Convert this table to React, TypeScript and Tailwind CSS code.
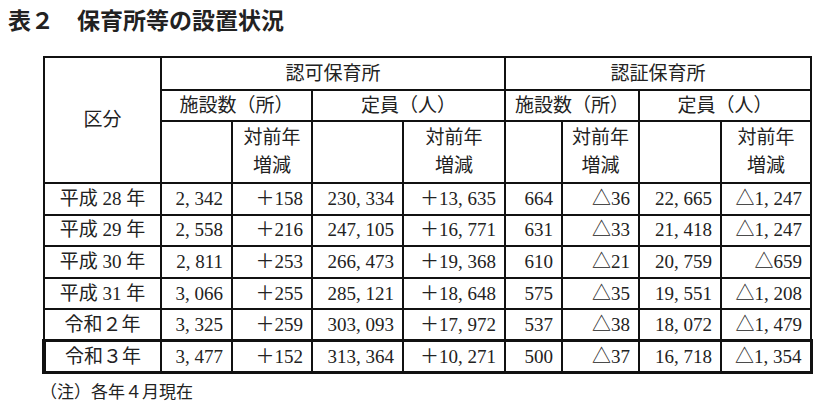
import { Fragment } from 'react';

const serif = { fontFamily: '"Liberation Serif", "Noto Sans CJK JP", serif' };

const rows = [
  ['平成 28 年', '2, 342', '＋158', '230, 334', '＋13, 635', '664', '△36', '22, 665', '△1, 247'],
  ['平成 29 年', '2, 558', '＋216', '247, 105', '＋16, 771', '631', '△33', '21, 418', '△1, 247'],
  ['平成 30 年', '2, 811', '＋253', '266, 473', '＋19, 368', '610', '△21', '20, 759', '△659'],
  ['平成 31 年', '3, 066', '＋255', '285, 121', '＋18, 648', '575', '△35', '19, 551', '△1, 208'],
  ['令和２年', '3, 325', '＋259', '303, 093', '＋17, 972', '537', '△38', '18, 072', '△1, 479'],
  ['令和３年', '3, 477', '＋152', '313, 364', '＋10, 271', '500', '△37', '16, 718', '△1, 354'],
];

const widths = ['w-[117px]', 'w-[71px]', 'w-[80px]', 'w-[91px]', 'w-[102px]', 'w-[57px]', 'w-[77px]', 'w-[82px]', 'w-[90px]'];

const cell = 'border-2 border-[#111]';

export default function App() {
  return (
    <div className="w-[835px] h-[414px] bg-white text-[#222] overflow-hidden">
      <div
        className="pl-[8px] pt-[5px] text-[23px] leading-[28px] font-bold"
        style={{ fontFamily: '"Noto Sans CJK JP", sans-serif' }}
      >
        表２　保育所等の設置状況
      </div>

      <table className="ml-[42px] mt-[23px] border-collapse text-[19px] leading-[28px]" style={serif}>
        <colgroup>
          {widths.map((w, i) => (
            <col key={i} className={w} />
          ))}
        </colgroup>
        <thead>
          <tr className="h-[33px]">
            <th rowSpan={3} className={`${cell} font-normal text-center`}>区分</th>
            <th colSpan={4} className={`${cell} font-normal text-center`}>認可保育所</th>
            <th colSpan={4} className={`${cell} font-normal text-center`}>認証保育所</th>
          </tr>
          <tr className="h-[31px]">
            <th colSpan={2} className={`${cell} font-normal text-center`}>施設数（所）</th>
            <th colSpan={2} className={`${cell} font-normal text-center`}>定員（人）</th>
            <th colSpan={2} className={`${cell} font-normal text-center`}>施設数（所）</th>
            <th colSpan={2} className={`${cell} font-normal text-center`}>定員（人）</th>
          </tr>
          <tr className="h-[62px]">
            {[0, 1, 2, 3].map((i) => (
              <Fragment key={i}>
                <th className={cell}></th>
                <th className={`${cell} font-normal text-center`}>
                  対前年
                  <br />
                  増減
                </th>
              </Fragment>
            ))}
          </tr>
        </thead>
        <tbody>
          {rows.map((r, ri) => {
            const last = ri === rows.length - 1;
            return (
              <tr key={ri} className="h-[31.6px]">
                {r.map((v, ci) => (
                  <td
                    key={ci}
                    className={`${cell} ${ci === 0 ? 'text-center' : 'text-right pr-[8px]'} ${
                      last ? 'border-y-[3px]' : ''
                    } ${last && ci === 0 ? 'border-l-[4px]' : ''} ${last && ci === r.length - 1 ? 'border-r-[3px]' : ''}`}
                  >
                    {v}
                  </td>
                ))}
              </tr>
            );
          })}
        </tbody>
      </table>

      <div className="ml-[40px] mt-[8px] text-[17px] leading-[22px]" style={serif}>
        （注）各年４月現在
      </div>
    </div>
  );
}
